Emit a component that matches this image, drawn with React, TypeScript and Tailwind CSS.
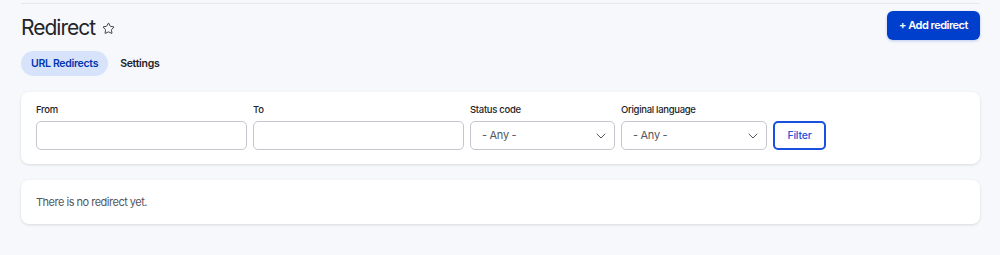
import { ChevronDown, Star } from "lucide-react";

function SelectBox({ width }: { width: string }) {
  return (
    <div
      className={`flex h-[29px] ${width} items-center justify-between rounded-[5px] border border-[#c4c6cd] bg-white pl-[11px] pr-[5px] text-[11px] tracking-[-0.3px] text-[#55565b]`}
    >
      <span>- Any -</span>
      <ChevronDown size={16} strokeWidth={1.5} className="text-[#55565b]" />
    </div>
  );
}

function Field({ label, children }: { label: string; children: React.ReactNode }) {
  return (
    <div className="flex flex-col gap-[5px]">
      <label className="text-[9.5px] font-medium leading-[13px] tracking-[-0.3px] text-[#232429]">{label}</label>
      {children}
    </div>
  );
}

export default function App() {
  return (
    <div className="min-h-[255px] bg-[#f7f8fc] px-[21px] pt-[3px] pr-[20px] font-['Inter',sans-serif] text-[#232429]">
      <div className="h-px bg-[#e6e7ee]" />
      <div className="flex items-start justify-between pt-[7px]">
        <div className="flex items-center gap-[7px] pt-[4px]">
          <h1 className="text-[21px] font-normal leading-[26px] tracking-[-1px]">Redirect</h1>
          <Star size={13} strokeWidth={1.6} className="text-[#232429]" />
        </div>
        <button className="h-[29px] w-[93px] rounded-[6px] bg-[#003ecc] text-[11px] font-semibold tracking-[-0.5px] text-white shadow-[0_1px_3px_rgba(0,62,204,0.25)]">
          + Add redirect
        </button>
      </div>
      <div className="mt-[10px] flex items-center gap-[2px] text-[10.5px] font-semibold tracking-[-0.3px]">
        <span className="flex h-[25px] items-center rounded-full bg-[#d7e3fb] px-[10px] text-[#0036b1]">URL Redirects</span>
        <span className="px-[10px] text-[#232429]">Settings</span>
      </div>
      <div className="mt-[16px] rounded-[8px] bg-white px-[15px] pb-[14px] pt-[11px] shadow-[0_1px_3px_rgba(0,0,0,0.12)]">
        <div className="flex items-end gap-[6px]">
          <Field label="From">
            <div className="h-[29px] w-[211px] rounded-[5px] border border-[#c4c6cd] bg-white" />
          </Field>
          <Field label="To">
            <div className="h-[29px] w-[211px] rounded-[5px] border border-[#c4c6cd] bg-white" />
          </Field>
          <Field label="Status code">
            <SelectBox width="w-[145px]" />
          </Field>
          <Field label="Original language">
            <SelectBox width="w-[146px]" />
          </Field>
          <button className="h-[29px] w-[53px] rounded-[5px] border-2 border-[#1a4fe0] bg-white text-[10.5px] font-medium tracking-[-0.2px] text-[#2553d6]">
            Filter
          </button>
        </div>
      </div>
      <div className="mt-[16px] flex h-[44px] items-center rounded-[8px] bg-white px-[15px] text-[11px] tracking-[-0.5px] text-[#55565b] shadow-[0_1px_3px_rgba(0,0,0,0.12)]">
        There is no redirect yet.
      </div>
    </div>
  );
}
